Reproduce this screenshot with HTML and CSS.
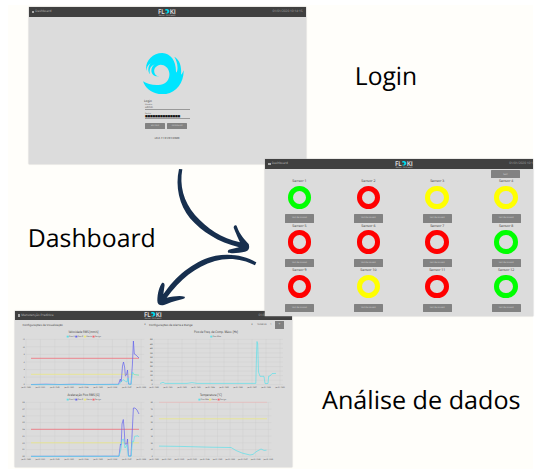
FILE: index.html
```html
<!DOCTYPE html>
<html lang="pt-BR">
<head>
<meta charset="utf-8">
<title>Floki</title>
<link rel="stylesheet" href="styles.css">
</head>
<body>
<main class="canvas">
  <section class="window login">
    <header class="bar"><span class="title"><i></i>Dashboard</span><svg class="brand" viewBox="0 0 18 8"></svg><span class="clock">01/01/2020 10:14:15</span></header>
    <div class="login-body">
      <svg class="wave" viewBox="69 53 123 124"><path d="M69 138C82 147 104 151 122 148C140 145 150 130 148 113C146 97 134 88 122 88C106 90 98 104 105 116C108 121 112 123 117 122C106 125 95 119 94 106C94 98 98 92 104 87C92 92 86 102 90 117C82 108 84 93 92 84C84 88 80 96 79 107C74 80 95 53 127 53C152 54 168 76 168 108C169 114 171 112 172 104C174 90 170 76 163 64C177 72 186 90 183 118C186 117 188 112 191 105C192 145 165 177 128 177C98 177 76 160 69 138Z" fill="#00e5ff"/></svg>
      <form class="form">
        <h2>Login</h2>
        <label>Usuário</label><div class="field">admin</div>
        <label class="second">Senha</label><div class="field password">■■■■■■■■■■■■■■</div>
        <div class="actions"><span class="button">ENTRAR</span><span class="button">CANCELAR</span></div>
      </form>
      <p class="version">v0.2.11 01/01/2020</p>
    </div>
  </section>

  <section class="window analysis">
    <header class="bar"><span class="title"><i></i>Manutenção Preditiva</span><svg class="brand" viewBox="0 0 18 8"></svg><span class="clock">01/01/2020 10:14:15</span></header>
    <div class="filters">
      <span class="filter one">Configurações de Visualização<b>▼</b></span>
      <span class="filter two">Configurações de Alerta e Range<b>▼</b></span>
      <span>10/04/20</span><span>1</span><span class="go">+</span>
    </div>
    <svg class="charts" id="charts" viewBox="14 330 278 137"></svg>
  </section>

  <section class="window dashboard">
    <header class="bar"><span class="title"><i></i>Dashboard</span><svg class="brand" viewBox="0 0 18 8"></svg><span class="clock">01/01/2020 10:1</span></header>
    <div class="toolbar"><span class="button">Sair</span></div>
    <div class="sensors" id="sensors"></div>
  </section>

  <svg class="notes" viewBox="0 0 541 474">
    <text x="354.8" y="85" textLength="62.3" lengthAdjust="spacingAndGlyphs">Login</text>
    <text x="27.8" y="247" textLength="128" lengthAdjust="spacingAndGlyphs">Dashboard</text>
    <text x="322" y="409" textLength="198.5" lengthAdjust="spacingAndGlyphs">Análise de dados</text>
    <g transform="translate(140 155) scale(.33333)" fill="#172f4e">
      <path d="M117 42L127 43C118 90 130 140 165 180C200 220 245 250 300 262C292 245 284 225 281 218C282 209 289 209 291 215C300 240 315 255 326 267C330 280 326 287 315 290C300 294 275 296 265 293C261 287 266 283 275 282L297 277C235 262 185 230 150 190C118 150 105 95 117 42Z"/>
      <path d="M349 322L345 331C310 312 265 306 225 318C165 335 120 375 80 428C100 424 120 421 134 425C137 431 130 432 120 434C100 438 85 445 72 450C60 453 52 448 52 437C52 415 58 395 66 384C73 382 75 388 73 396L70 418C105 365 160 320 215 305C265 293 315 302 349 322Z"/>
    </g>
  </svg>
</main>
<script src="app.js"></script>
</body>
</html>
```
FILE: styles.css
```css
* { box-sizing: border-box; }
body { margin: 0; background: #fff; font-family: "Noto Sans", "Open Sans", sans-serif; text-rendering: geometricPrecision; }
.canvas { position: relative; width: 541px; height: 474px; overflow: hidden; background: linear-gradient(#fffefa, #fffefa) 8px 5px / 525px 464px no-repeat; }
.window { position: absolute; width: 277px; height: 156.5px; background: #dcdcdc; box-shadow: 0 0 1px 0.3px #bdbdbd; overflow: hidden; font-size: 3.6px; line-height: 1; color: #555; }
.login { left: 28.5px; top: 7px; }
.dashboard { left: 265px; top: 159px; width: 268px; }
.analysis { left: 14.5px; top: 310.5px; }

.bar { height: 9.5px; background: #404040; color: #b4b4b4; display: grid; grid-template-columns: 126.5px 18px 1fr; align-items: center; padding: 0 3px; }
.dashboard .bar { padding-right: 0; }
.title { display: flex; align-items: center; gap: 1.2px; font-size: 3.15px; }
.title i { width: 2.5px; height: 2.5px; background: #aaa; }
.brand { width: 18px; height: 8px; display: block; }
.brand-name { font: 700 6.8px "Liberation Sans", sans-serif; fill: #e4e4e4; }
.brand-sub { font: 2px "Liberation Sans", sans-serif; fill: #ccc; }
.clock { text-align: right; font-size: 3.15px; color: #a4a4a4; white-space: nowrap; }
.button { display: flex; align-items: center; justify-content: center; background: #828282; color: #d4d4d4; border-radius: 0.5px; font-size: 2.2px; }

.login-body { display: flex; flex-direction: column; align-items: center; padding-top: 36px; }
.wave { width: 41px; height: 41.3px; margin-right: 8px; }
.form { width: 45px; margin: 5px 0 0 1px; display: flex; flex-direction: column; }
.form h2 { margin: 0 0 0 -1px; font-size: 3px; font-weight: 400; line-height: 4px; color: #333; }
.form label { font-size: 2px; line-height: 3px; color: #555; margin-top: 0.3px; }
.form .second { margin-top: 1.9px; }
.field { font-size: 2.7px; line-height: 3.2px; height: 3.8px; border-bottom: 0.7px solid #999; }
.field.password { height: 4px; color: #111; font-family: "DejaVu Sans", sans-serif; font-size: 2.95px; letter-spacing: -0.8px; letter-spacing: -0.78px; width: 45px; }
.actions { display: flex; gap: 2.2px; margin-top: 4px; }
.actions .button { width: 20px; height: 6px; }
.version { margin: 7.6px 0 0; font-size: 2.8px; line-height: 4px; color: #333; }
.form .password { letter-spacing: -0.27px; }

.toolbar { height: 10px; padding: 1.5px 13px 0 0; display: flex; justify-content: flex-end; }
.toolbar .button { width: 29px; height: 8.2px; font-size: 2.6px; }
.sensors { width: 275.6px; display: grid; grid-template-columns: repeat(4, 1fr); grid-auto-rows: 44.7px; padding-top: 1.5px; }
.sensor { display: flex; flex-direction: column; align-items: center; }
.sensor span { font-size: 3.5px; line-height: 4.6px; color: #444; }
.ring { width: 23.5px; height: 23.5px; margin: 1px 0 5.2px; border: 5px solid; border-radius: 50%; }
.green { border-color: #0f0; }
.red { border-color: #f00; }
.yellow { border-color: #ff0; }
.sensor .button { width: 29px; height: 8.3px; font-size: 2.2px; }

.filters { height: 10px; padding: 0 7.5px 0 8px; display: flex; align-items: center; font-size: 2.3px; white-space: nowrap; }
.filter { display: flex; justify-content: space-between; font-size: 2.85px; color: #444; }
.filter b { font-size: 2px; }
.one { width: 123.5px; margin-right: 3px; }
.two { width: 104px; margin-right: 4px; }
.filters span:nth-child(4) { margin: 0 auto; }
.go { width: 9px; height: 8.2px; background: #808080; color: #ddd; display: flex; align-items: center; justify-content: center; font-size: 4px; }
.charts { display: block; width: 278px; height: 137px; margin-left: -0.5px; }
.charts .grid { stroke: #cbcbcb; stroke-width: 0.35; }
.charts .tick { font-size: 1.7px; fill: #333; }
.charts .name { font-size: 3.4px; fill: #444; }
.charts .key { font-size: 2px; fill: #555; }
.charts polyline { fill: none; stroke-width: 0.7; stroke-linejoin: round; }

.notes { position: absolute; left: 0; top: 0; width: 541px; height: 474px; }
.notes text { font: 25px "Open Sans", "Noto Sans", sans-serif; fill: #000; }
```
FILE: app.js
```js
document.querySelectorAll('.brand').forEach(svg => {
  svg.innerHTML = `<text x="0.3" y="5.6" textLength="6.2" lengthAdjust="spacingAndGlyphs" class="brand-name">FL</text>
    <path d="M7.2 1.2C10.3.2 11.6 2 11.2 3.8C10.8 5.7 8.4 6.2 6.8 4.7C8.7 5 9.5 4.2 9.3 3.2C9.1 2.3 8 2.2 7.2 2.8Z" fill="#00dcef"/>
    <text x="12" y="5.6" textLength="5.5" lengthAdjust="spacingAndGlyphs" class="brand-name">KI</text>
    <text x="0.5" y="7.5" textLength="16.8" lengthAdjust="spacingAndGlyphs" class="brand-sub">SMART SYSTEMS</text>`;
});

const states = ['green', 'red', 'yellow', 'yellow', 'red', 'red', 'red', 'green', 'red', 'yellow', 'red', 'green'];
document.getElementById('sensors').innerHTML = states.map((state, i) =>
  `<div class="sensor"><span>Sensor ${i + 1}</span><div class="ring ${state}"></div><div class="button">VER DETALHES</div></div>`
).join('');

const CYAN = '#5cdfea', BLUE = '#6262ee', YELLOW = '#eeea78', RED = '#f5606c', PALE_RED = '#ebb9b9';
const charts = [
  { name: 'Velocidade RMS [mm/s]', mid: 83.5, w: 30, left: 26, step: 14.4, cols: 9, top: 339.3, bottom: 384.7, rows: 6, max: 12, keys: ['Eixo X', 'Eixo Z', 'Alerta', 'Perigo'], colors: [CYAN, BLUE, YELLOW, RED],
    lines: [[YELLOW, '31,374.3 131,374.3 139,375'], [RED, '31,358.3 139,358.3'],
      [BLUE, '31,384.5 46,384.2 60,384.5 75,384.2 90,384.5 118.5,384.3 120.3,379 121.2,382 122.5,366 123.5,362 124.6,367 125.4,376 126.5,375 127.5,370 128.5,384 131,384.3 132.4,365 133.4,341 134.3,354 136,355 139,358'],
      [CYAN, '31,384.7 119,384.6 121,382 123,379.5 125,381 127,382 128,378 129,384.5 131,384.5 132.5,372 134,374.5 139,375.2']] },
  { name: 'Pico de Freq. de Comp. Máxx. [Hz]', mid: 216, w: 44, left: 154, step: 14, cols: 10, top: 339.3, bottom: 384.7, rows: 10, max: 500, keys: ['Eixo Máx'], colors: [CYAN],
    lines: [[CYAN, '160,383.5 163,382.3 165,383.4 187,383.4 192,382.6 197,383.4 255.8,383.4 256.5,355 257,341.5 257.7,344 258.5,372 260,376.3 264,376.3 265,383.5 268,383.5 268.7,376 270,376 272,373.6 276,373.4']] },
  { name: 'Aceleração Pico RMS [G]', mid: 83.5, w: 32, left: 26, step: 14.4, cols: 9, top: 402.3, bottom: 456.3, rows: 8, max: 0.8, keys: ['Eixo X', 'Eixo Z', 'Alerta', 'Perigo'], colors: [CYAN, BLUE, YELLOW, RED],
    lines: [[YELLOW, '31,442.8 139,442.8'], [RED, '31,429.3 139,429.3'],
      [BLUE, '31,456.3 119,456.2 120.5,444 121.2,445 122,424 123.3,419.5 124.3,431 125,444 126.8,444 127.5,439 128.5,456 131,456 132.3,430 133.4,408 135,408 137,410 139,414'],
      [CYAN, '31,456.4 119,456.3 121,449 122,440 123.5,439 125,448 127,445 128.4,456.3 131.2,456.3 132.4,441 133.5,442 134.6,436.3 138,435.8 139,437']] },
  { name: 'Temperatura [°C]', mid: 211, w: 22, left: 154, step: 12.7, cols: 10, top: 402.3, bottom: 456.3, rows: 8, max: 80, keys: ['Eixo Máx', 'Alerta', 'Perigo'], colors: [CYAN, YELLOW, RED],
    lines: [[PALE_RED, '159,402.3 267,402.3'], [YELLOW, '159,418.8 267,418.8'],
      [CYAN, '159,446.1 180,446.4 210,447.2 231,447.5 236,450.5 242,453 250,455 253,454.4 256,451.8 261,449 264,450.4 266.5,450.2']] }
];

const text = (cls, x, y, value, anchor = 'middle') => `<text class="${cls}" x="${x}" y="${y}" text-anchor="${anchor}">${value}</text>`;

document.getElementById('charts').innerHTML = charts.map(c => {
  let out = `<text class="name" x="${c.mid - c.w / 2}" y="${c.top - 6.2}" textLength="${c.w}" lengthAdjust="spacingAndGlyphs">${c.name}</text>`;
  const start = c.mid - c.keys.length * 4.2 - (c.keys.length === 1 ? 1.5 : 0);
  c.keys.forEach((key, i) => {
    const x = start + i * 8.6 + (c.keys.length === 3 && i ? 2 : 0);
    const y = c.top - 3.6;
    out += `<rect x="${x}" y="${y}" width="2" height="1.8" fill="${c.colors[i]}"/>` + text('key', x + 2.4, y + 1.7, key, 'start');
  });
  const right = c.left + c.step * (c.cols - 1);
  for (let i = 0; i <= c.rows; i++) {
    const y = c.top + (c.bottom - c.top) * i / c.rows;
    const value = c.max * (c.rows - i) / c.rows;
    out += `<path class="grid" d="M${c.left} ${y}H${right + 3}"/>` + text('tick', c.left - 1.2, y + 0.7, c.max < 1 ? value.toFixed(1) : value, 'end');
  }
  for (let i = 0; i < c.cols; i++) {
    const x = c.left + c.step * i;
    out += `<path class="grid" d="M${x} ${c.top}V${c.bottom}"/>` + text('tick', x, c.bottom + 3.2, 'Jan 01 12:0' + i);
  }
  return out + c.lines.map(([color, points]) => `<polyline stroke="${color}" points="${points}"/>`).join('');
}).join('');
```
